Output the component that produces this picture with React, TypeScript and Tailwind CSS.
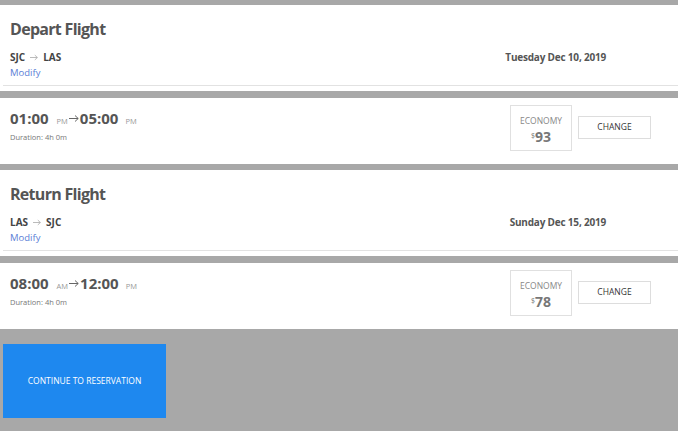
const font = { fontFamily: '"Open Sans", "Liberation Sans", sans-serif' };

type Leg = {
  title: string;
  from: string;
  to: string;
  date: string;
  depart: string;
  departMeridiem: string;
  arrive: string;
  arriveMeridiem: string;
  duration: string;
  price: number;
};

const legs: Leg[] = [
  {
    title: 'Depart Flight',
    from: 'SJC',
    to: 'LAS',
    date: 'Tuesday Dec 10, 2019',
    depart: '01:00',
    departMeridiem: 'PM',
    arrive: '05:00',
    arriveMeridiem: 'PM',
    duration: '4h 0m',
    price: 93,
  },
  {
    title: 'Return Flight',
    from: 'LAS',
    to: 'SJC',
    date: 'Sunday Dec 15, 2019',
    depart: '08:00',
    departMeridiem: 'AM',
    arrive: '12:00',
    arriveMeridiem: 'PM',
    duration: '4h 0m',
    price: 78,
  },
];

function Arrow({ w, h, color }: { w: number; h: number; color: string }) {
  return (
    <svg width={w} height={h} viewBox="0 0 10 8" fill="none" stroke={color} strokeWidth="1">
      <path d="M0 4h9.2M6 1l3.2 3L6 7" />
    </svg>
  );
}

function LegHeader({ leg }: { leg: Leg }) {
  return (
    <div className="bg-white h-[86px] flex flex-col">
      <div className="flex-1 pl-[10px] pt-[13px]">
        <h2 className="text-[16px] leading-[22px] font-bold tracking-[-0.7px] text-[#555]">{leg.title}</h2>
        <div className="mt-[10px] flex justify-between pr-[72px]">
          <div>
            <div className="flex items-center h-[14px] text-[10px] leading-[14px] font-bold text-[#444]">
              <span>{leg.from}</span>
              <span className="mx-[5px]">
                <Arrow w={8} h={7} color="#aaa" />
              </span>
              <span>{leg.to}</span>
            </div>
            <div className="mt-[2px] text-[9.5px] leading-[14px] text-[#5b80d6]">Modify</div>
          </div>
          <div className="text-[10px] leading-[14px] font-bold tracking-[-0.2px] text-[#555]">{leg.date}</div>
        </div>
      </div>
      {/* divider */}
      <div className="h-px bg-[#e2e2e2] ml-[3px] mb-[5px]" />
    </div>
  );
}

function LegTimes({ leg }: { leg: Leg }) {
  return (
    <div className="bg-white h-[66px] flex justify-between pl-[10px] pr-[27px]">
      <div className="pt-[10px]">
        <div className="flex items-baseline h-[20px] leading-[20px]">
          <span className="text-[15px] font-bold text-[#555]">{leg.depart}</span>
          <span className="ml-[8px] text-[7.5px] text-[#999]">{leg.departMeridiem}</span>
          <span className="ml-[1px] self-center">
            <Arrow w={10} h={9} color="#666" />
          </span>
          <span className="ml-[1px] text-[15px] font-bold text-[#555]">{leg.arrive}</span>
          <span className="ml-[7px] text-[7.5px] text-[#999]">{leg.arriveMeridiem}</span>
        </div>
        <div className="mt-[4px] text-[7.5px] leading-[10px] text-[#777]">Duration: {leg.duration}</div>
      </div>

      <div className="pt-[7px] flex items-start gap-[6px]">
        <div className="w-[62px] h-[46px] border border-[#e0e0e0] flex flex-col items-center pt-[9px]">
          <div className="text-[8.5px] leading-[12px] text-[#888]">ECONOMY</div>
          <div className="mt-[2px] flex items-start text-[#777]">
            <span className="text-[7px] leading-[10px] mt-[2px]">$</span>
            <span className="text-[14px] leading-[16px] font-bold">{leg.price}</span>
          </div>
        </div>
        <button className="mt-[11px] w-[73px] h-[23px] border border-[#ddd] bg-white text-[8.5px] text-[#333]">
          CHANGE
        </button>
      </div>
    </div>
  );
}

export default function App() {
  return (
    <div className="min-h-[431px] bg-[#a8a8a8] pt-[5px]" style={font}>
      <LegHeader leg={legs[0]} />
      <div className="mt-[7px]">
        <LegTimes leg={legs[0]} />
      </div>
      <div className="mt-[6px]">
        <LegHeader leg={legs[1]} />
      </div>
      <div className="mt-[7px]">
        <LegTimes leg={legs[1]} />
      </div>

      <button className="mt-[15px] ml-[3px] w-[163px] h-[74px] bg-[#1e88ef] text-white text-[8.5px]">
        CONTINUE TO RESERVATION
      </button>
    </div>
  );
}
